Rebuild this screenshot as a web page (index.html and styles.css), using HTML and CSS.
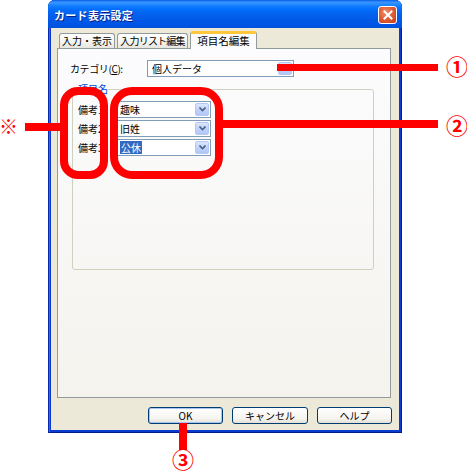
FILE: index.html
```html
<!DOCTYPE html>
<html lang="ja">
<head>
<meta charset="utf-8">
<title>カード表示設定</title>
<link rel="stylesheet" href="styles.css">
</head>
<body>
<div class="stage">
  <div class="window">
    <div class="titlebar">
      <span class="title">カード表示設定</span>
      <span class="close">
        <svg width="10" height="10" viewBox="0 0 10 10"><path d="M1.5 1.5 L8.5 8.5 M8.5 1.5 L1.5 8.5" stroke="#fff" stroke-width="2" stroke-linecap="square"/></svg>
      </span>
    </div>
    <div class="client">
      <div class="tabs">
        <div class="tab t1">入力・表示</div>
        <div class="tab t2">入力リスト編集</div>
        <div class="tab t3 active">項目名編集</div>
      </div>
      <div class="page">
        <div class="cat-row">
          <span class="cat-label">カテゴリ(<u>C</u>):</span>
          <div class="combo wide"><span class="ctext">個人データ</span><span class="drop"><svg width="7" height="5" viewBox="0 0 7 5"><path d="M0.5 0.5 L3.5 3.5 L6.5 0.5" fill="none" stroke="#4d6185" stroke-width="1.6"/></svg></span></div>
        </div>
        <fieldset class="group">
          <legend>項目名</legend>
          <div class="row">
            <span class="lbl">備考1</span>
            <div class="combo"><span class="ctext">趣味</span><span class="drop"><svg width="7" height="5" viewBox="0 0 7 5"><path d="M0.5 0.5 L3.5 3.5 L6.5 0.5" fill="none" stroke="#4d6185" stroke-width="1.6"/></svg></span></div>
          </div>
          <div class="row">
            <span class="lbl">備考2</span>
            <div class="combo"><span class="ctext">旧姓</span><span class="drop"><svg width="7" height="5" viewBox="0 0 7 5"><path d="M0.5 0.5 L3.5 3.5 L6.5 0.5" fill="none" stroke="#4d6185" stroke-width="1.6"/></svg></span></div>
          </div>
          <div class="row">
            <span class="lbl">備考3</span>
            <div class="combo"><span class="ctext sel">公休</span><span class="drop"><svg width="7" height="5" viewBox="0 0 7 5"><path d="M0.5 0.5 L3.5 3.5 L6.5 0.5" fill="none" stroke="#4d6185" stroke-width="1.6"/></svg></span></div>
          </div>
        </fieldset>
      </div>
      <div class="buttons">
        <div class="btn default">OK</div>
        <div class="btn cancel">キャンセル</div>
        <div class="btn">ヘルプ</div>
      </div>
    </div>
  </div>

  <svg class="marks" width="467" height="474" viewBox="0 0 467 474">
    <rect x="277" y="64" width="161" height="7" fill="#ff0000"/>
    <rect x="64" y="91" width="40" height="84" rx="14" fill="none" stroke="#ff0000" stroke-width="8"/>
    <rect x="114" y="91" width="105" height="84" rx="18" fill="none" stroke="#ff0000" stroke-width="8"/>
    <rect x="223" y="120" width="215" height="8" fill="#ff0000"/>
    <rect x="25" y="123" width="36" height="8" fill="#ff0000"/>
    <rect x="179" y="423" width="8" height="27" fill="#ff0000"/>
  </svg>
  <span class="num n1">①</span>
  <span class="num n2">②</span>
  <span class="num n3">③</span>
  <span class="kome">※</span>
</div>
</body>
</html>
```

FILE: styles.css
```css
* { box-sizing: border-box; }
html, body { margin: 0; padding: 0; background: #ffffff; }
body {
  font-family: "Noto Sans CJK JP", "Noto Sans", sans-serif;
  font-size: 10px;
  color: #000;
}
.stage { position: relative; width: 467px; height: 474px; }

.window {
  margin-left: 48px;
  width: 354px;
  height: 433px;
  display: flex;
  flex-direction: column;
  border-radius: 7px 7px 0 0;
  overflow: hidden;
  background: #0a3bd0;
  padding: 0 3px 3px;
  box-shadow: inset 1px 0 #0b2aa8, inset -1px 0 #001c8c, inset 0 -1px #001c8c, inset 2px 0 #2d67e6;
}
.titlebar {
  height: 28px;
  margin: 0 -3px;
  flex: none;
  display: flex;
  align-items: center;
  justify-content: space-between;
  padding: 0 5px 0 6px;
  background: linear-gradient(to bottom, #0a5fe8 0%, #3a93ff 8%, #288eff 14%, #127dff 22%, #036ffc 32%, #0262ee 50%, #0057e5 75%, #0054e3 92%, #0150d8 100%);
}
.title {
  color: #fff;
  font-weight: bold;
  font-size: 11px;
  letter-spacing: 0.3px;
  text-shadow: 1px 1px 0 #0a1d8a;
  margin-top: 1px;
}
.close {
  width: 19px;
  height: 18px;
  margin-top: 1px;
  border: 1px solid #fff;
  border-radius: 3px;
  background: radial-gradient(circle at 40% 35%, #f0926e 0%, #e0603a 45%, #c23a18 100%);
  display: flex;
  align-items: center;
  justify-content: center;
}

.client {
  flex: 1;
  background: #ece9d8;
  display: flex;
  flex-direction: column;
  padding: 3px 7px 0 6px;
}
.tabs {
  height: 17px;
  display: flex;
  align-items: flex-end;
  gap: 2px;
  margin-left: 2px;
  position: relative;
  z-index: 2;
}
.tab {
  height: 15px;
  border: 1px solid #919b9c;
  border-bottom: none;
  border-radius: 3px 3px 0 0;
  background: linear-gradient(#ffffff, #f3f3ef 60%, #e6e5de);
  text-align: center;
  line-height: 14px;
  white-space: nowrap;
}
.t1 { width: 56px; }
.t2 { width: 71px; letter-spacing: -0.8px; }
.t3 { width: 67px; }
.tab.active {
  height: 18px;
  margin-bottom: -1px;
  background: #fcfcfe;
  border-top: 3px solid #ffc83c;
  box-shadow: inset 0 -1px #fcfcfe;
  line-height: 14px;
  font-size: 10.5px;
}

.page {
  height: 350px;
  margin-right: 1px;
  border: 1px solid #919b9c;
  background: linear-gradient(#fcfcfe, #f4f3ee);
  padding: 11px 0 0 12px;
  position: relative;
  z-index: 1;
}
.cat-row {
  display: flex;
  align-items: center;
  height: 17px;
}
.cat-label { width: 77px; letter-spacing: -0.4px; }
.cat-label u { text-decoration: underline; }

.combo {
  width: 94px;
  height: 17px;
  border: 1px solid #7f9db9;
  background: #fff;
  display: flex;
  align-items: center;
  justify-content: space-between;
  padding: 1px;
  padding-left: 2px;
}
.combo.wide { width: 147px; padding-left: 4px; }
.ctext { line-height: 13px; }
.ctext.sel { background: #316ac5; color: #fff; padding: 0 1px; }
.drop {
  width: 14px;
  height: 13px;
  border: 1px solid #b5c8f3;
  border-radius: 2px;
  background: linear-gradient(#dbe6fd, #c1d3fb 50%, #b2c7f6);
  display: flex;
  align-items: center;
  justify-content: center;
}

.group {
  margin: 6px 0 0 2px;
  width: 302px;
  height: 187px;
  border: 1px solid #d0d0bf;
  border-radius: 3px;
  padding: 6px 5px 0 5px;
  min-width: 0;
}
.group legend {
  padding: 0;
  color: #0046d5;
  line-height: 12px;
  font-size: 10px;
}
.row {
  display: flex;
  align-items: center;
  height: 17px;
  margin-bottom: 2px;
}
.lbl { width: 39px; }

.buttons {
  display: flex;
  justify-content: flex-end;
  gap: 9px;
  margin-top: 9px;
  height: 17px;
}
.btn {
  width: 75px;
  height: 17px;
  border: 1px solid #003c74;
  border-radius: 3px;
  background: linear-gradient(#ffffff, #f5f4ef 70%, #e3e0d5);
  text-align: center;
  line-height: 15px;
}
.btn.cancel { width: 76px; }
.btn.default { box-shadow: inset 0 0 0 1px #a8c4f0; }

.marks { position: absolute; left: 0; top: 0; pointer-events: none; z-index: 10; }
.num {
  position: absolute;
  z-index: 11;
  color: #ff0000;
  font-size: 22px;
  font-weight: bold;
  line-height: 22px;
}
.n1 { left: 446px; top: 54px; }
.n2 { left: 446px; top: 113px; }
.n3 { left: 172px; top: 447px; }
.kome {
  position: absolute;
  z-index: 11;
  left: -1px;
  top: 116px;
  color: #ff0000;
  font-size: 19px;
  line-height: 20px;
}
```
